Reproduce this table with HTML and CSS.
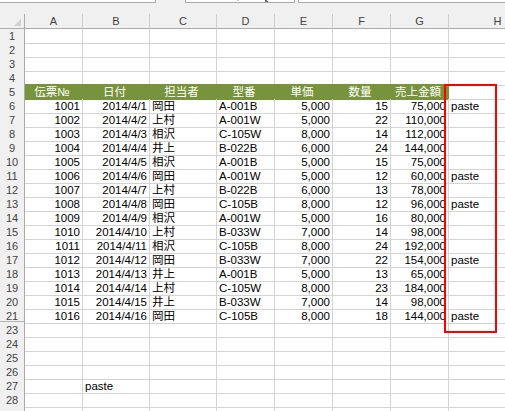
FILE: index.html
```
<!DOCTYPE html>
<html lang="ja">
<head>
<meta charset="utf-8">
<title>Sheet</title>
<link rel="stylesheet" href="styles.css">
</head>
<body>
<div class="topbar">
  <div class="box namebox"></div>
  <div class="box fxbox"><svg class="fxmarks" width="108" height="2" viewBox="0 0 108 2"><rect x="51" y="0" width="2" height="1" fill="#c8c8c8"/><rect x="79" y="0" width="2" height="2" fill="#6a6a6a"/><rect x="81" y="1" width="1" height="1" fill="#6a6a6a"/></svg></div>
  <div class="box formula"></div>
</div>
<div class="sheet">
  <div class="row colhdr">
    <div class="corner"><svg width="7" height="7" viewBox="0 0 7 7"><polygon points="7,0 7,7 0,7" fill="#d2d2d2"/></svg></div>
    <div>A</div><div>B</div><div>C</div><div>D</div><div>E</div><div>F</div><div>G</div><div>H</div>
  </div>
  <div class="row"><div class="rh">1</div><div></div><div></div><div></div><div></div><div></div><div></div><div></div><div></div></div>
  <div class="row"><div class="rh">2</div><div></div><div></div><div></div><div></div><div></div><div></div><div></div><div></div></div>
  <div class="row"><div class="rh">3</div><div></div><div></div><div></div><div></div><div></div><div></div><div></div><div></div></div>
  <div class="row"><div class="rh">4</div><div></div><div></div><div></div><div></div><div></div><div></div><div></div><div></div></div>
  <div class="row"><div class="rh">5</div><div class="hd">伝票№</div><div class="hd">日付</div><div class="hd">担当者</div><div class="hd">型番</div><div class="hd">単価</div><div class="hd">数量</div><div class="hd">売上金額</div><div></div></div>
  <div class="row"><div class="rh">6</div><div class="r">1001</div><div class="r">2014/4/1</div><div>岡田</div><div>A-001B</div><div class="r">5,000</div><div class="r">15</div><div class="r">75,000</div><div>paste</div></div>
  <div class="row"><div class="rh">7</div><div class="r">1002</div><div class="r">2014/4/2</div><div>上村</div><div>A-001W</div><div class="r">5,000</div><div class="r">22</div><div class="r">110,000</div><div></div></div>
  <div class="row"><div class="rh">8</div><div class="r">1003</div><div class="r">2014/4/3</div><div>相沢</div><div>C-105W</div><div class="r">8,000</div><div class="r">14</div><div class="r">112,000</div><div></div></div>
  <div class="row"><div class="rh">9</div><div class="r">1004</div><div class="r">2014/4/4</div><div>井上</div><div>B-022B</div><div class="r">6,000</div><div class="r">24</div><div class="r">144,000</div><div></div></div>
  <div class="row"><div class="rh">10</div><div class="r">1005</div><div class="r">2014/4/5</div><div>相沢</div><div>A-001B</div><div class="r">5,000</div><div class="r">15</div><div class="r">75,000</div><div></div></div>
  <div class="row"><div class="rh">11</div><div class="r">1006</div><div class="r">2014/4/6</div><div>岡田</div><div>A-001W</div><div class="r">5,000</div><div class="r">12</div><div class="r">60,000</div><div>paste</div></div>
  <div class="row"><div class="rh">12</div><div class="r">1007</div><div class="r">2014/4/7</div><div>上村</div><div>B-022B</div><div class="r">6,000</div><div class="r">13</div><div class="r">78,000</div><div></div></div>
  <div class="row"><div class="rh">13</div><div class="r">1008</div><div class="r">2014/4/8</div><div>岡田</div><div>C-105B</div><div class="r">8,000</div><div class="r">12</div><div class="r">96,000</div><div>paste</div></div>
  <div class="row"><div class="rh">14</div><div class="r">1009</div><div class="r">2014/4/9</div><div>相沢</div><div>A-001W</div><div class="r">5,000</div><div class="r">16</div><div class="r">80,000</div><div></div></div>
  <div class="row"><div class="rh">15</div><div class="r">1010</div><div class="r">2014/4/10</div><div>上村</div><div>B-033W</div><div class="r">7,000</div><div class="r">14</div><div class="r">98,000</div><div></div></div>
  <div class="row"><div class="rh">16</div><div class="r">1011</div><div class="r">2014/4/11</div><div>相沢</div><div>C-105B</div><div class="r">8,000</div><div class="r">24</div><div class="r">192,000</div><div></div></div>
  <div class="row"><div class="rh">17</div><div class="r">1012</div><div class="r">2014/4/12</div><div>岡田</div><div>B-033W</div><div class="r">7,000</div><div class="r">22</div><div class="r">154,000</div><div>paste</div></div>
  <div class="row"><div class="rh">18</div><div class="r">1013</div><div class="r">2014/4/13</div><div>井上</div><div>A-001B</div><div class="r">5,000</div><div class="r">13</div><div class="r">65,000</div><div></div></div>
  <div class="row"><div class="rh">19</div><div class="r">1014</div><div class="r">2014/4/14</div><div>上村</div><div>C-105W</div><div class="r">8,000</div><div class="r">23</div><div class="r">184,000</div><div></div></div>
  <div class="row"><div class="rh">20</div><div class="r">1015</div><div class="r">2014/4/15</div><div>井上</div><div>B-033W</div><div class="r">7,000</div><div class="r">14</div><div class="r">98,000</div><div></div></div>
  <div class="row"><div class="rh hidden-after">21</div><div class="r">1016</div><div class="r">2014/4/16</div><div>岡田</div><div>C-105B</div><div class="r">8,000</div><div class="r">18</div><div class="r">144,000</div><div>paste</div></div>
  <div class="row"><div class="rh">23</div><div></div><div></div><div></div><div></div><div></div><div></div><div></div><div></div></div>
  <div class="row"><div class="rh">24</div><div></div><div></div><div></div><div></div><div></div><div></div><div></div><div></div></div>
  <div class="row"><div class="rh">25</div><div></div><div></div><div></div><div></div><div></div><div></div><div></div><div></div></div>
  <div class="row"><div class="rh">26</div><div></div><div></div><div></div><div></div><div></div><div></div><div></div><div></div></div>
  <div class="row"><div class="rh">27</div><div></div><div>paste</div><div></div><div></div><div></div><div></div><div></div><div></div></div>
  <div class="row"><div class="rh">28</div><div></div><div></div><div></div><div></div><div></div><div></div><div></div><div></div></div>
  <div class="row"><div class="rh"></div><div></div><div></div><div></div><div></div><div></div><div></div><div></div><div></div></div>
</div>
<div class="frame"></div>
</body>
</html>
```
FILE: styles.css
```
html, body {
  margin: 0;
  padding: 0;
}
body {
  width: 505px;
  height: 411px;
  overflow: hidden;
  position: relative;
  background: #fff;
  font-family: "Liberation Sans", "Noto Sans CJK JP", sans-serif;
}
.topbar {
  height: 14px;
  background: #f0f0f0;
  display: flex;
  align-items: flex-start;
}
.box {
  height: 3px;
  box-sizing: border-box;
  background: #fff;
  border-bottom: 1px solid #ababab;
}
.namebox {
  width: 156px;
  border-right: 1px solid #ababab;
}
.fxbox {
  width: 110px;
  margin-left: 29px;
  border-left: 1px solid #ababab;
  border-right: 1px solid #ababab;
  display: flex;
}
.fxmarks {
  display: block;
}
.formula {
  flex: 1;
  margin-left: 3px;
  border-left: 1px solid #ababab;
}
.sheet {
  width: 547px;
}
.row {
  display: grid;
  grid-template-columns: 25px 58px 67px 67px 58px 58px 58px 58px 98px;
  height: 14px;
}
.row > div {
  box-sizing: border-box;
  border-right: 1px solid #d4d4d4;
  border-bottom: 1px solid #d4d4d4;
  font-family: "Liberation Sans", "Noto Sans CJK JP", sans-serif;
  font-size: 11.5px;
  line-height: 13px;
  padding: 1px 2px 0;
  white-space: nowrap;
  color: #000;
}
.row > .r {
  text-align: right;
}
.row > .rh {
  background: #f0f0f0;
  border-right-color: #ababab;
  border-bottom-color: #d5d5d5;
  font-size: 11px;
  color: #444;
  text-align: center;
  padding: 1px 0 0;
}
.row > .hidden-after {
  box-shadow: inset 0 -1px 0 #f0f0f0, inset 0 -2px 0 #b4b4b4;
}
.colhdr {
  height: 15px;
}
.colhdr > div {
  background: #f0f0f0;
  border-right-color: #cfcfcf;
  border-bottom-color: #ababab;
  font-size: 11px;
  line-height: 14px;
  padding: 0;
  color: #444;
  text-align: center;
}
.colhdr > .corner {
  border-right-color: #ababab;
  display: flex;
  justify-content: flex-end;
  align-items: flex-end;
  padding: 0 3px 2px 0;
}
.corner svg {
  display: block;
}
.row > .hd {
  background: #77933c;
  border-color: #77933c;
  box-shadow: 0 -1px 0 #77933c;
  color: #fff;
  text-align: center;
  padding: 1px 3px 0 0;
}
.frame {
  position: absolute;
  left: 444px;
  top: 84px;
  width: 53px;
  height: 249px;
  box-sizing: border-box;
  border: 2px solid #f00;
}
```
